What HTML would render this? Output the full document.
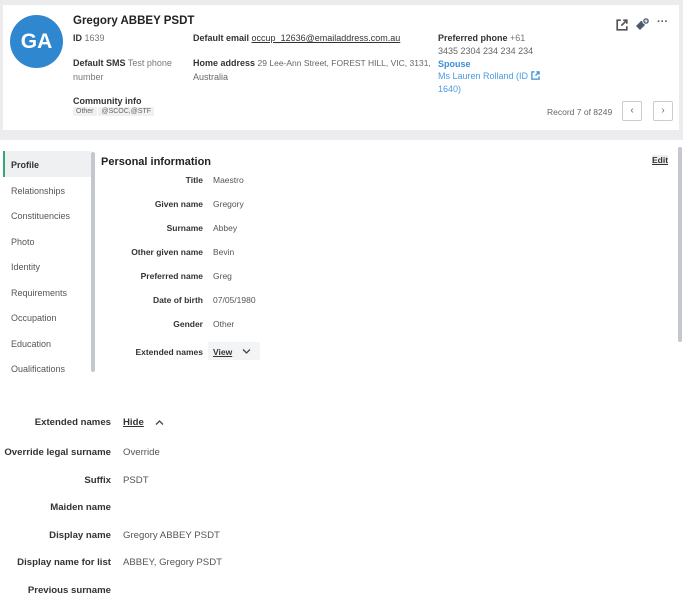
<!DOCTYPE html>
<html><head><meta charset="utf-8"><style>
*{margin:0;padding:0;box-sizing:border-box}
body{width:683px;height:591px;overflow:hidden;background:#fff;font-family:"Liberation Sans",sans-serif;color:#444;font-size:8.5px;position:relative}
.a{position:absolute;white-space:nowrap}
b{font-weight:bold;color:#333}
.top{position:absolute;left:0;top:0;width:683px;height:140px;background:#ececef}
.card{position:absolute;left:3px;top:5px;width:676px;height:125px;background:#fff}
.card2{position:absolute;left:3px;top:141px;width:680px;height:232px;background:#fff}
.lbl{position:absolute;text-align:right;font-weight:bold;color:#333;white-space:nowrap}
.val{position:absolute;color:#555;white-space:nowrap}
.nav{position:absolute;left:11px;color:#555;font-size:9px}
.hd{font-size:9px}
.bt .lbl,.bt .val{font-size:9.6px}
</style></head><body>
<div class="top"></div>
<div class="card"></div>
<div class="a" style="left:10px;top:15px;width:53px;height:53px;border-radius:50%;background:#2f87cf;color:#fff;font-size:21px;font-weight:bold;text-align:center;line-height:53px">GA</div>
<div class="a" style="left:73px;top:15px;font-size:11.5px;font-weight:bold;color:#222">Gregory ABBEY PSDT</div>
<div class="hd">
<div class="a" style="left:73px;top:33px"><b>ID</b> <span style="color:#777">1639</span></div>
<div class="a" style="left:73px;top:58px"><b>Default SMS</b> <span style="color:#777">Test phone</span></div>
<div class="a" style="left:73px;top:72px;color:#777">number</div>
<div class="a" style="left:73px;top:96px"><b>Community info</b></div>
<div class="a" style="left:193px;top:33px"><b>Default email</b> <span style="text-decoration:underline;color:#333">occup_12636@emailaddress.com.au</span></div>
<div class="a" style="left:193px;top:58px"><b>Home address</b> <span style="color:#666;font-size:8.5px">29 Lee-Ann Street, FOREST HILL, VIC, 3131,</span></div>
<div class="a" style="left:193px;top:72px;color:#666">Australia</div>
<div class="a" style="left:438px;top:33px"><b>Preferred phone</b> <span style="color:#777">+61</span></div>
<div class="a" style="left:438px;top:46px;color:#666">3435 2304 234 234 234</div>
<div class="a" style="left:438px;top:59px;color:#3a8fd6;font-weight:bold">Spouse</div>
<div class="a" style="left:438px;top:71px;color:#4a9be0">Ms Lauren Rolland (ID <svg width="9" height="9" viewBox="0 0 10 10" style="vertical-align:-1px"><path d="M4 1H1v8h8V6" fill="none" stroke="#3a8fd6" stroke-width="1.4"/><path d="M5 5l4-4M6 1h3v3" fill="none" stroke="#3a8fd6" stroke-width="1.4"/></svg></div>
<div class="a" style="left:438px;top:84px;color:#4a9be0">1640)</div>
</div>
<div class="a" style="left:547px;top:107px;color:#666">Record 7 of 8249</div>
<div class="a" style="left:73px;top:108px;font-size:7px;color:#666"><span style="background:#eef0f2;padding:1px 3px">Other</span> <span style="background:#eef0f2;padding:1px 3px">@SCOC,@STF</span></div>
<svg class="a" style="left:616px;top:19px" width="12" height="12" viewBox="0 0 10 10"><path d="M4 1H1v8h8V6" fill="none" stroke="#555" stroke-width="1.4"/><path d="M4.5 5.5L9 1M6 1h3v3" fill="none" stroke="#555" stroke-width="1.4"/></svg>
<svg class="a" style="left:635px;top:17px" width="15" height="15" viewBox="0 0 15 15"><path d="M1 7l5-5h4v4l-5 5z" fill="#4a5a70" transform="translate(0,2)"/><circle cx="11" cy="4" r="3.3" fill="#4a5a70" stroke="#fff" stroke-width="1"/><path d="M11 2.3v3.4M9.3 4h3.4" stroke="#fff" stroke-width="1"/></svg>
<div class="a" style="left:657px;top:16px;font-size:11px;color:#555;font-weight:bold">···</div>
<div class="a" style="left:622px;top:101px;width:20px;height:20px;border:1px solid #ccc;border-radius:2px;text-align:center;line-height:18px;color:#666;font-size:10px">&lsaquo;</div>
<div class="a" style="left:653px;top:101px;width:20px;height:20px;border:1px solid #ccc;border-radius:2px;text-align:center;line-height:18px;color:#666;font-size:10px">&rsaquo;</div>

<div class="card2"></div>
<div class="a" style="left:3px;top:151px;width:88px;height:26px;background:#eef0f2;border-left:2px solid #3aa37b"></div>
<div class="a" style="left:91px;top:152px;width:4px;height:220px;background:#c4c8cd;border-radius:2px"></div>
<div class="nav a" style="top:160px;font-weight:bold;color:#333">Profile</div>
<div class="nav a" style="top:186px">Relationships</div>
<div class="nav a" style="top:211px">Constituencies</div>
<div class="nav a" style="top:237px">Photo</div>
<div class="nav a" style="top:262px">Identity</div>
<div class="nav a" style="top:288px">Requirements</div>
<div class="nav a" style="top:313px">Occupation</div>
<div class="nav a" style="top:339px">Education</div>
<div class="nav a" style="top:364px;height:8px;overflow:hidden">Qualifications</div>
<div class="a" style="left:101px;top:156px;font-size:11px;font-weight:bold;color:#222">Personal information</div>
<div class="a" style="left:652px;top:155px;font-weight:bold;text-decoration:underline;color:#333;background:#eee">Edit</div>
<div class="a" style="left:678px;top:147px;width:4px;height:195px;background:#c4c8cd;border-radius:2px"></div>

<div class="lbl" style="right:480px;top:175px">Title</div><div class="val" style="left:213px;top:175px">Maestro</div>
<div class="lbl" style="right:480px;top:199px">Given name</div><div class="val" style="left:213px;top:199px">Gregory</div>
<div class="lbl" style="right:480px;top:223px">Surname</div><div class="val" style="left:213px;top:223px">Abbey</div>
<div class="lbl" style="right:480px;top:247px">Other given name</div><div class="val" style="left:213px;top:247px">Bevin</div>
<div class="lbl" style="right:480px;top:271px">Preferred name</div><div class="val" style="left:213px;top:271px">Greg</div>
<div class="lbl" style="right:480px;top:295px">Date of birth</div><div class="val" style="left:213px;top:295px">07/05/1980</div>
<div class="lbl" style="right:480px;top:319px">Gender</div><div class="val" style="left:213px;top:319px">Other</div>
<div class="lbl" style="right:480px;top:347px">Extended names</div>
<div class="a" style="left:208px;top:342px;width:52px;height:18px;background:#f3f4f5"></div>
<div class="val" style="left:213px;top:347px;text-decoration:underline;color:#333;font-weight:bold">View</div>
<svg class="a" style="left:242px;top:348px" width="9" height="7" viewBox="0 0 9 7"><path d="M1 1.5l3.5 3.5L8 1.5" fill="none" stroke="#444" stroke-width="1.3"/></svg>

<div class="bt">
<div class="lbl" style="right:572px;top:417px">Extended names</div>
<div class="val" style="left:123px;top:417px;text-decoration:underline;color:#333;font-weight:bold">Hide</div>
<div class="lbl" style="right:572px;top:447px">Override legal surname</div><div class="val" style="left:123px;top:447px">Override</div>
<div class="lbl" style="right:572px;top:475px">Suffix</div><div class="val" style="left:123px;top:475px">PSDT</div>
<div class="lbl" style="right:572px;top:502px">Maiden name</div>
<div class="lbl" style="right:572px;top:530px">Display name</div><div class="val" style="left:123px;top:530px">Gregory ABBEY PSDT</div>
<div class="lbl" style="right:572px;top:557px">Display name for list</div><div class="val" style="left:123px;top:557px">ABBEY, Gregory PSDT</div>
<div class="lbl" style="right:572px;top:585px">Previous surname</div>
</div>
<svg class="a" style="left:155px;top:419px" width="9" height="7" viewBox="0 0 9 7"><path d="M1 5.5L4.5 2 8 5.5" fill="none" stroke="#444" stroke-width="1.3"/></svg>
</body></html>
